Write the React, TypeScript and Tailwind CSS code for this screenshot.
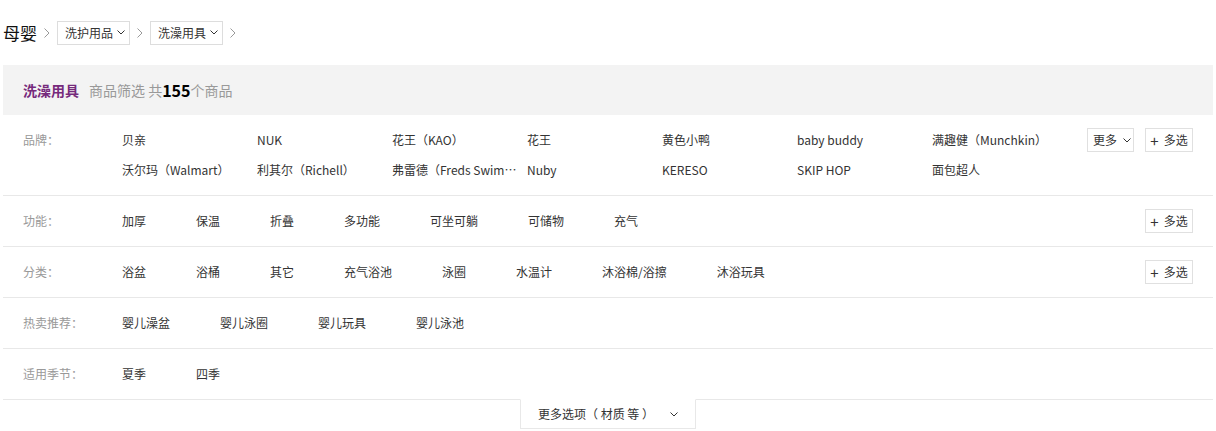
import React from 'react';

const font = { fontFamily: '"Noto Sans CJK SC", "Liberation Sans", sans-serif' };

const brands = [
  '贝亲', 'NUK', '花王（KAO）', '花王', '黄色小鸭', 'baby buddy', '满趣健（Munchkin）',
  '沃尔玛（Walmart）', '利其尔（Richell）', '弗雷德（Freds Swim Academy）', 'Nuby', 'KERESO', 'SKIP HOP', '面包超人',
];

const rows = [
  { label: '功能：', items: ['加厚', '保温', '折叠', '多功能', '可坐可躺', '可储物', '充气'], multi: true },
  { label: '分类：', items: ['浴盆', '浴桶', '其它', '充气浴池', '泳圈', '水温计', '沐浴棉/浴擦', '沐浴玩具'], multi: true },
  { label: '热卖推荐：', items: ['婴儿澡盆', '婴儿泳圈', '婴儿玩具', '婴儿泳池'], multi: false },
  { label: '适用季节：', items: ['夏季', '四季'], multi: false },
];

const Down = () => (
  <svg width="8" height="5" viewBox="0 0 8 5" className="shrink-0">
    <polyline points="0.5,0.5 4,4 7.5,0.5" fill="none" stroke="#333" strokeWidth="1" />
  </svg>
);

const Right = () => (
  <svg width="6" height="10" viewBox="0 0 6 10" className="mx-[7px] shrink-0">
    <polyline points="0.5,0.5 5,5 0.5,9.5" fill="none" stroke="#999" strokeWidth="1" />
  </svg>
);

const MultiBtn = () => (
  <button className="flex items-center justify-center gap-[5px] w-[48px] h-[24px] border border-[#e0e0e0] bg-white text-[12px] text-[#333] leading-none whitespace-nowrap">
    <span className="text-[15px]">+</span>
    <span>多选</span>
  </button>
);

const Crumb = ({ text }: { text: string }) => (
  <div className="flex items-center gap-[4px] h-[24px] pl-[7px] pr-[4px] border border-[#ddd] text-[12px] leading-none whitespace-nowrap">
    <span>{text}</span>
    <Down />
  </div>
);

const App: React.FC = () => {
  return (
    <div className="w-[1210px] mx-auto bg-white text-[#333]" style={font}>
      {/* Breadcrumb */}
      <div className="flex items-center h-[65px]">
        <span className="text-[17px] leading-none text-[#111]">母婴</span>
        <Right />
        <Crumb text="洗护用品" />
        <Right />
        <Crumb text="洗澡用具" />
        <Right />
      </div>

      {/* Header bar */}
      <div className="flex items-center h-[50px] bg-[#f3f3f3] pl-[20px] text-[14px] leading-none whitespace-nowrap">
        <span className="font-bold text-[#762a7c]">洗澡用具</span>
        <span className="ml-[10px] text-[#999]">商品筛选 共</span>
        <span className="font-bold text-[16px] text-black">155</span>
        <span className="text-[#999]">个商品</span>
      </div>

      {/* Brand row */}
      <div className="flex border-b border-[#e8e8e8] px-[20px] py-[10px] text-[12px]">
        <div className="w-[99px] leading-[30px] text-[#999]">品牌：</div>
        <div className="flex flex-wrap w-[945px]">
          {brands.map((b) => (
            <div key={b} className="w-[135px] pr-[8px] leading-[30px] truncate">{b}</div>
          ))}
        </div>
        <div className="flex items-start gap-[11px] ml-[20px] mt-[3px]">
          <button className="flex items-center gap-[6px] w-[47px] h-[24px] pl-[5px] border border-[#e0e0e0] bg-white text-[12px] leading-none whitespace-nowrap">
            <span>更多</span>
            <Down />
          </button>
          <MultiBtn />
        </div>
      </div>

      {/* Other rows */}
      {rows.map((r) => (
        <div key={r.label} className="flex items-center h-[51px] border-b border-[#e8e8e8] px-[20px] text-[12px]">
          <div className="w-[99px] text-[#999]">{r.label}</div>
          <div className="flex whitespace-nowrap">
            {r.items.map((it) => (
              <span key={it} className="mr-[50px]">{it}</span>
            ))}
          </div>
          {r.multi && <div className="ml-auto"><MultiBtn /></div>}
        </div>
      ))}

      {/* More options */}
      <div className="flex items-center justify-center gap-[16px] w-[176px] h-[30px] mx-auto -mt-px border border-[#e8e8e8] border-t-white bg-white text-[12px] whitespace-nowrap">
        <span>更多选项（ 材质 等 ）</span>
        <Down />
      </div>
    </div>
  );
};

export default App;
